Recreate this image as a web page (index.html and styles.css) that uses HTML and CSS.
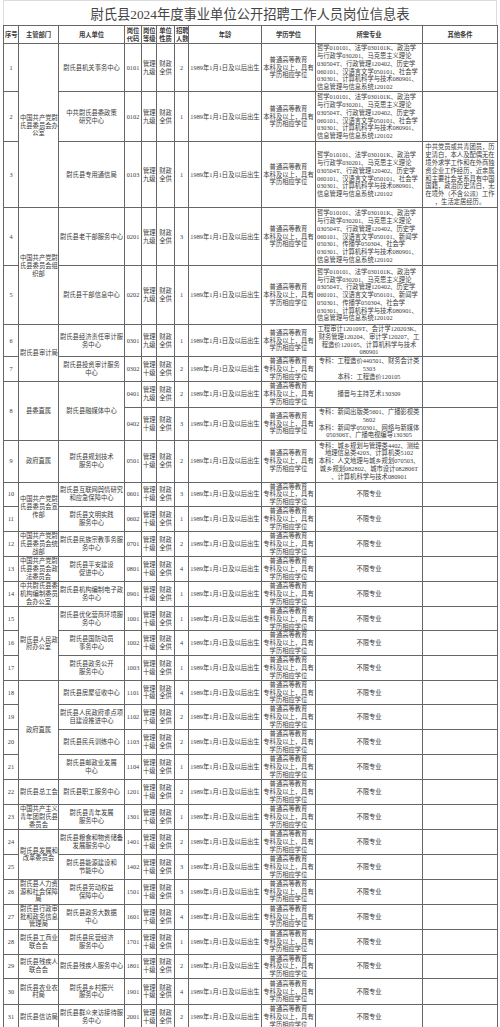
FILE: index.html
```html
<!DOCTYPE html>
<html lang="zh-CN">
<head>
<meta charset="utf-8">
<title>尉氏县2024年度事业单位公开招聘工作人员岗位信息表</title>
<link rel="stylesheet" href="styles.css">
</head>
<body>
<div class="sheet">
  <div class="title">尉氏县2024年度事业单位公开招聘工作人员岗位信息表</div>
  <table class="t">
    <colgroup>
      <col class="c-no"><col class="c-dept"><col class="c-unit"><col class="c-code"><col class="c-lvl"><col class="c-nat"><col class="c-num"><col class="c-age"><col class="c-edu"><col class="c-major"><col class="c-other">
    </colgroup>
    <tr class="hd">
      <th>序号</th><th>主管部门</th><th>用人单位</th><th>岗位<br>代码</th><th>岗位<br>等级</th><th>单位<br>性质</th><th>招聘<br>人数</th><th>年龄</th><th>学历学位</th><th>所需专业</th><th>其他条件</th>
    </tr>
    <tr class="h48">
      <td>1</td>
      <td rowspan="3">中国共产党尉<br>氏县委员会办<br>公室</td>
      <td>尉氏县机关事务中心</td><td>0101</td><td>管理<br>九级</td><td>财政<br>全供</td><td>2</td><td>1989年1月1日及以后出生</td>
      <td>普通高等教育<br>本科及以上，具有<br>学历相应学位</td>
      <td class="left">哲学010101、法学030101K、政治学<br>与行政学030201、马克思主义理论<br>030504T、行政管理120402、历史学<br>060101、汉语言文学050101、社会学<br>030301、计算机科学与技术080901、<br>信息管理与信息系统120102</td>
      <td></td>
    </tr>
    <tr class="h50">
      <td>2</td>
      <td>中共尉氏县委政策<br>研究中心</td><td>0102</td><td>管理<br>九级</td><td>财政<br>全供</td><td>1</td><td>1989年1月1日及以后出生</td>
      <td>普通高等教育<br>本科及以上，具有<br>学历相应学位</td>
      <td class="left">哲学010101、法学030101K、政治学<br>与行政学030201、马克思主义理论<br>030504T、行政管理120402、历史学<br>060101、汉语言文学050101、社会学<br>030301、计算机科学与技术080901、<br>信息管理与信息系统120102</td>
      <td></td>
    </tr>
    <tr class="h66">
      <td>3</td>
      <td>尉氏县专用通信局</td><td>0103</td><td>管理<br>九级</td><td>财政<br>全供</td><td>1</td><td>1989年1月1日及以后出生</td>
      <td>普通高等教育<br>本科及以上，具有<br>学历相应学位</td>
      <td class="left">哲学010101、法学030101K、政治学<br>与行政学030201、马克思主义理论<br>030504T、行政管理120402、历史学<br>060101、汉语言文学050101、社会学<br>030301、计算机科学与技术080901、<br>信息管理与信息系统120102</td>
      <td>中共党员或共青团员，历<br>史清白，本人及配偶无在<br>境外求学工作和在外商独<br>资企业工作经历，近亲属<br>和主要社会关系具有中国<br>国籍，政治历史清白，无<br>在境外（不含公派）工作<br>，生活定居经历。</td>
    </tr>
    <tr class="h58">
      <td>4</td>
      <td rowspan="2">中国共产党尉<br>氏县委员会组<br>织部</td>
      <td>尉氏县老干部服务中心</td><td>0201</td><td>管理<br>九级</td><td>财政<br>全供</td><td>3</td><td>1989年1月1日及以后出生</td>
      <td>普通高等教育<br>本科及以上，具有<br>学历相应学位</td>
      <td class="left">哲学010101、法学030101K、政治学<br>与行政学030201、马克思主义理论<br>030504T、行政管理120402、历史学<br>060101、汉语言文学050101、新闻学<br>050301、传播学050304、社会学<br>030301、计算机科学与技术080901、<br>信息管理与信息系统120102</td>
      <td></td>
    </tr>
    <tr class="h59">
      <td>5</td>
      <td>尉氏县干部信息中心</td><td>0202</td><td>管理<br>九级</td><td>财政<br>全供</td><td>1</td><td>1989年1月1日及以后出生</td>
      <td>普通高等教育<br>本科及以上，具有<br>学历相应学位</td>
      <td class="left">哲学010101、法学030101K、政治学<br>与行政学030201、马克思主义理论<br>030504T、行政管理120402、历史学<br>060101、汉语言文学050101、新闻学<br>050301、传播学050304、社会学<br>030301、计算机科学与技术080901、<br>信息管理与信息系统120102</td>
      <td></td>
    </tr>
    <tr class="h31">
      <td>6</td>
      <td rowspan="2">尉氏县审计局</td>
      <td>尉氏县经济责任审计服<br>务中心</td><td>0301</td><td>管理<br>九级</td><td>财政<br>全供</td><td>1</td><td>1989年1月1日及以后出生</td>
      <td>普通高等教育<br>本科及以上，具有<br>学历相应学位</td>
      <td>工程审计120109T、会计学120203K、<br>财务管理120204、审计学120207、工<br>程造价120105、计算机科学与技术<br>080901</td>
      <td></td>
    </tr>
    <tr class="h24">
      <td>7</td>
      <td>尉氏县投资审计服务<br>中心</td><td>0302</td><td>管理<br>十级</td><td>财政<br>全供</td><td>2</td><td>1989年1月1日及以后出生</td>
      <td>普通高等教育<br>专科及以上，具有<br>学历相应学位</td>
      <td>专科：工程造价440501、财务会计类<br>5303<br>本科：工程造价120105</td>
      <td></td>
    </tr>
    <tr class="h26">
      <td rowspan="2">8</td>
      <td rowspan="2">县委直属</td>
      <td rowspan="2">尉氏县融媒体中心</td>
      <td>0401</td><td>管理<br>九级</td><td>财政<br>全供</td><td>2</td><td>1989年1月1日及以后出生</td>
      <td>普通高等教育<br>本科及以上，具有<br>学历相应学位</td>
      <td>播音与主持艺术130309</td>
      <td></td>
    </tr>
    <tr class="h33">
      <td>0402</td><td>管理<br>十级</td><td>财政<br>全供</td><td>3</td><td>1989年1月1日及以后出生</td>
      <td>普通高等教育<br>专科及以上，具有<br>学历相应学位</td>
      <td>专科：新闻出版类5601、广播影视类<br>5602<br>本科：新闻学050301、网络与新媒体<br>050306T、广播电视编导130305</td>
      <td></td>
    </tr>
    <tr class="h42">
      <td>9</td>
      <td>政府直属</td>
      <td>尉氏县规划技术<br>服务中心</td><td>0501</td><td>管理<br>十级</td><td>财政<br>全供</td><td>2</td><td>1989年1月1日及以后出生</td>
      <td>普通高等教育<br>专科及以上，具有<br>学历相应学位</td>
      <td>专科：城乡规划与管理类4402、测绘<br>地理信息类4203、计算机类5102<br>本科：人文地理与城乡规划070503、<br>城乡规划082802、城市设计082806T<br>、计算机科学与技术080901</td>
      <td></td>
    </tr>
    <tr class="h24">
      <td>10</td>
      <td rowspan="2">中国共产党尉<br>氏县委员会宣<br>传部</td>
      <td>尉氏县互联网舆情研究<br>和应急保障中心</td><td>0601</td><td>管理<br>十级</td><td>财政<br>全供</td><td>3</td><td>1989年1月1日及以后出生</td>
      <td>普通高等教育<br>专科及以上，具有<br>学历相应学位</td>
      <td>不限专业</td><td></td>
    </tr>
    <tr class="h25">
      <td>11</td>
      <td>尉氏县文明实践<br>服务中心</td><td>0602</td><td>管理<br>十级</td><td>财政<br>全供</td><td>1</td><td>1989年1月1日及以后出生</td>
      <td>普通高等教育<br>专科及以上，具有<br>学历相应学位</td>
      <td>不限专业</td><td></td>
    </tr>
    <tr class="h25">
      <td>12</td>
      <td>中国共产党尉<br>氏县委员会统<br>战部</td>
      <td>尉氏县民族宗教事务服<br>务中心</td><td>0701</td><td>管理<br>十级</td><td>财政<br>全供</td><td>2</td><td>1989年1月1日及以后出生</td>
      <td>普通高等教育<br>专科及以上，具有<br>学历相应学位</td>
      <td>不限专业</td><td></td>
    </tr>
    <tr class="h25">
      <td>13</td>
      <td>中国共产党尉<br>氏县委员会政<br>法委员会</td>
      <td>尉氏县平安建设<br>促进中心</td><td>0801</td><td>管理<br>十级</td><td>财政<br>全供</td><td>4</td><td>1989年1月1日及以后出生</td>
      <td>普通高等教育<br>专科及以上，具有<br>学历相应学位</td>
      <td>不限专业</td><td></td>
    </tr>
    <tr class="h25">
      <td>14</td>
      <td>中共尉氏县委<br>机构编制委员<br>会办公室</td>
      <td>尉氏县机构编制电子政<br>务中心</td><td>0901</td><td>管理<br>十级</td><td>财政<br>全供</td><td>1</td><td>1989年1月1日及以后出生</td>
      <td>普通高等教育<br>专科及以上，具有<br>学历相应学位</td>
      <td>不限专业</td><td></td>
    </tr>
    <tr class="h24">
      <td>15</td>
      <td rowspan="3">尉氏县人民政<br>府办公室</td>
      <td>尉氏县优化营商环境服<br>务中心</td><td>1001</td><td>管理<br>十级</td><td>财政<br>全供</td><td>1</td><td>1989年1月1日及以后出生</td>
      <td>普通高等教育<br>专科及以上，具有<br>学历相应学位</td>
      <td>不限专业</td><td></td>
    </tr>
    <tr class="h24">
      <td>16</td>
      <td>尉氏县国防动员<br>事务中心</td><td>1002</td><td>管理<br>十级</td><td>财政<br>全供</td><td>4</td><td>1989年1月1日及以后出生</td>
      <td>普通高等教育<br>专科及以上，具有<br>学历相应学位</td>
      <td>不限专业</td><td></td>
    </tr>
    <tr class="h25">
      <td>17</td>
      <td>尉氏县政务公开<br>服务中心</td><td>1003</td><td>管理<br>十级</td><td>财政<br>全供</td><td>1</td><td>1989年1月1日及以后出生</td>
      <td>普通高等教育<br>专科及以上，具有<br>学历相应学位</td>
      <td>不限专业</td><td></td>
    </tr>
    <tr class="h24">
      <td>18</td>
      <td rowspan="4">政府直属</td>
      <td>尉氏县房屋征收中心</td><td>1101</td><td>管理<br>十级</td><td>财政<br>全供</td><td>4</td><td>1989年1月1日及以后出生</td>
      <td>普通高等教育<br>专科及以上，具有<br>学历相应学位</td>
      <td>不限专业</td><td></td>
    </tr>
    <tr class="h25">
      <td>19</td>
      <td>尉氏县人民政府重点项<br>目建设推进中心</td><td>1102</td><td>管理<br>十级</td><td>财政<br>全供</td><td>2</td><td>1989年1月1日及以后出生</td>
      <td>普通高等教育<br>专科及以上，具有<br>学历相应学位</td>
      <td>不限专业</td><td></td>
    </tr>
    <tr class="h25">
      <td>20</td>
      <td>尉氏县民兵训练中心</td><td>1103</td><td>管理<br>十级</td><td>财政<br>全供</td><td>2</td><td>1989年1月1日及以后出生</td>
      <td>普通高等教育<br>专科及以上，具有<br>学历相应学位</td>
      <td>不限专业</td><td></td>
    </tr>
    <tr class="h25">
      <td>21</td>
      <td>尉氏县邮政业发展<br>中心</td><td>1104</td><td>管理<br>十级</td><td>财政<br>全供</td><td>1</td><td>1989年1月1日及以后出生</td>
      <td>普通高等教育<br>专科及以上，具有<br>学历相应学位</td>
      <td>不限专业</td><td></td>
    </tr>
    <tr class="h25">
      <td>22</td>
      <td>尉氏县总工会</td>
      <td>尉氏县职工服务中心</td><td>1201</td><td>管理<br>十级</td><td>财政<br>全供</td><td>2</td><td>1989年1月1日及以后出生</td>
      <td>普通高等教育<br>专科及以上，具有<br>学历相应学位</td>
      <td>不限专业</td><td></td>
    </tr>
    <tr class="h25">
      <td>23</td>
      <td>中国共产主义<br>青年团尉氏县<br>委员会</td>
      <td>尉氏县青年发展<br>服务中心</td><td>1301</td><td>管理<br>十级</td><td>财政<br>全供</td><td>1</td><td>1989年1月1日及以后出生</td>
      <td>普通高等教育<br>专科及以上，具有<br>学历相应学位</td>
      <td>不限专业</td><td></td>
    </tr>
    <tr class="h25">
      <td>24</td>
      <td rowspan="2">尉氏县发展和<br>改革委员会</td>
      <td>尉氏县粮食和物资储备<br>发展服务中心</td><td>1401</td><td>管理<br>十级</td><td>财政<br>全供</td><td>2</td><td>1989年1月1日及以后出生</td>
      <td>普通高等教育<br>专科及以上，具有<br>学历相应学位</td>
      <td>不限专业</td><td></td>
    </tr>
    <tr class="h24">
      <td>25</td>
      <td>尉氏县能源建设和<br>节能中心</td><td>1402</td><td>管理<br>十级</td><td>财政<br>全供</td><td>3</td><td>1989年1月1日及以后出生</td>
      <td>普通高等教育<br>专科及以上，具有<br>学历相应学位</td>
      <td>不限专业</td><td></td>
    </tr>
    <tr class="h25">
      <td>26</td>
      <td>尉氏县人力资<br>源和社会保障<br>局</td>
      <td>尉氏县劳动权益<br>保障中心</td><td>1501</td><td>管理<br>十级</td><td>财政<br>全供</td><td>3</td><td>1989年1月1日及以后出生</td>
      <td>普通高等教育<br>专科及以上，具有<br>学历相应学位</td>
      <td>不限专业</td><td></td>
    </tr>
    <tr class="h25">
      <td>27</td>
      <td>尉氏县行政审<br>批和政务信息<br>管理局</td>
      <td>尉氏县政务大数据<br>中心</td><td>1601</td><td>管理<br>十级</td><td>财政<br>全供</td><td>4</td><td>1989年1月1日及以后出生</td>
      <td>普通高等教育<br>专科及以上，具有<br>学历相应学位</td>
      <td>不限专业</td><td></td>
    </tr>
    <tr class="h25">
      <td>28</td>
      <td>尉氏县工商业<br>联合会</td>
      <td>尉氏县民营经济<br>服务中心</td><td>1701</td><td>管理<br>十级</td><td>财政<br>全供</td><td>1</td><td>1989年1月1日及以后出生</td>
      <td>普通高等教育<br>专科及以上，具有<br>学历相应学位</td>
      <td>不限专业</td><td></td>
    </tr>
    <tr class="h24">
      <td>29</td>
      <td>尉氏县残疾人<br>联合会</td>
      <td>尉氏县残疾人服务中心</td><td>1801</td><td>管理<br>十级</td><td>财政<br>全供</td><td>2</td><td>1989年1月1日及以后出生</td>
      <td>普通高等教育<br>专科及以上，具有<br>学历相应学位</td>
      <td>不限专业</td><td></td>
    </tr>
    <tr class="h26">
      <td>30</td>
      <td>尉氏县农业农<br>村局</td>
      <td>尉氏县乡村振兴<br>服务中心</td><td>1901</td><td>管理<br>十级</td><td>财政<br>全供</td><td>4</td><td>1989年1月1日及以后出生</td>
      <td>普通高等教育<br>专科及以上，具有<br>学历相应学位</td>
      <td>不限专业</td><td></td>
    </tr>
    <tr class="h24">
      <td>31</td>
      <td>尉氏县信访局</td>
      <td>尉氏县群众来访接待服<br>务中心</td><td>2001</td><td>管理<br>十级</td><td>财政<br>全供</td><td>2</td><td>1989年1月1日及以后出生</td>
      <td>普通高等教育<br>专科及以上，具有<br>学历相应学位</td>
      <td>不限专业</td><td></td>
    </tr>
  </table>
</div>
</body>
</html>
```
FILE: styles.css
```css
html, body {
  margin: 0;
  padding: 0;
  background: #ffffff;
}

.sheet {
  width: 494px;
  margin-left: 3px;
  font-family: "Liberation Serif", "Noto Sans CJK SC", serif;
  color: #3a3a3a;
}

.title {
  box-sizing: border-box;
  height: 25px;
  padding-top: 3px;
  border: 1px solid #dcdcdc;
  border-bottom: none;
  text-align: center;
  font-size: 13.3px;
  line-height: 21px;
  color: #444444;
  white-space: nowrap;
}

.t {
  width: 494px;
  border-collapse: collapse;
  table-layout: fixed;
}

.c-no { width: 15px; }
.c-dept { width: 40px; }
.c-unit { width: 66px; }
.c-code { width: 17px; }
.c-lvl { width: 15px; }
.c-nat { width: 18px; }
.c-num { width: 14px; }
.c-age { width: 73px; }
.c-edu { width: 54px; }
.c-major { width: 107px; }
.c-other { width: 75px; }

.t th,
.t td {
  border: 1px solid #666666;
  padding: 0 1px;
  font-size: 6.3px;
  line-height: 7.8px;
  text-align: center;
  vertical-align: middle;
  white-space: nowrap;
  overflow: hidden;
}

.t th {
  font-weight: 700;
  color: #3a3a3a;
}

.t td.left {
  text-align: left;
}

.hd { height: 18px; }
.h24 { height: 24px; }
.h25 { height: 25px; }
.h26 { height: 26px; }
.h31 { height: 31px; }
.h33 { height: 33px; }
.h42 { height: 42px; }
.h48 { height: 48px; }
.h50 { height: 50px; }
.h58 { height: 58px; }
.h59 { height: 59px; }
.h66 { height: 66px; }
```
